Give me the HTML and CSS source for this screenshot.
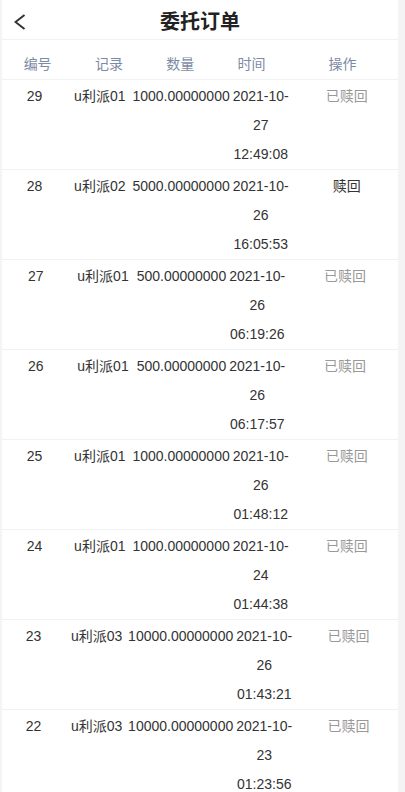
FILE: index.html
```html
<!DOCTYPE html>
<html lang="zh-CN">
<head>
<meta charset="utf-8">
<title>委托订单</title>
<link rel="stylesheet" href="styles.css">
</head>
<body>
<div class="page">
  <header class="topbar">
    <span class="back">
      <svg width="12" height="16" viewBox="0 0 12 16"><polyline points="10.5,1 1.5,8 10.5,15" fill="none" stroke="#333" stroke-width="2"/></svg>
    </span>
    <h1 class="title">委托订单</h1>
  </header>
  <div class="thead">
    <div class="th">编号</div>
    <div class="th">记录</div>
    <div class="th">数量</div>
    <div class="th">时间</div>
    <div class="th th-op">操作</div>
  </div>
  <div class="list">
    <div class="row">
      <div class="c c-id">29</div><div class="c c-rec">u利派01</div><div class="c c-amt">1000.00000000</div><div class="c c-time">2021-10-27 12:49:08</div><div class="c c-op done">已赎回</div>
    </div>
    <div class="row">
      <div class="c c-id">28</div><div class="c c-rec">u利派02</div><div class="c c-amt">5000.00000000</div><div class="c c-time">2021-10-26 16:05:53</div><div class="c c-op">赎回</div>
    </div>
    <div class="row">
      <div class="c c-id">27</div><div class="c c-rec">u利派01</div><div class="c c-amt">500.00000000</div><div class="c c-time">2021-10-26 06:19:26</div><div class="c c-op done">已赎回</div>
    </div>
    <div class="row">
      <div class="c c-id">26</div><div class="c c-rec">u利派01</div><div class="c c-amt">500.00000000</div><div class="c c-time">2021-10-26 06:17:57</div><div class="c c-op done">已赎回</div>
    </div>
    <div class="row">
      <div class="c c-id">25</div><div class="c c-rec">u利派01</div><div class="c c-amt">1000.00000000</div><div class="c c-time">2021-10-26 01:48:12</div><div class="c c-op done">已赎回</div>
    </div>
    <div class="row">
      <div class="c c-id">24</div><div class="c c-rec">u利派01</div><div class="c c-amt">1000.00000000</div><div class="c c-time">2021-10-24 01:44:38</div><div class="c c-op done">已赎回</div>
    </div>
    <div class="row">
      <div class="c c-id">23</div><div class="c c-rec">u利派03</div><div class="c c-amt">10000.00000000</div><div class="c c-time">2021-10-26 01:43:21</div><div class="c c-op done">已赎回</div>
    </div>
    <div class="row">
      <div class="c c-id">22</div><div class="c c-rec">u利派03</div><div class="c c-amt">10000.00000000</div><div class="c c-time">2021-10-23 01:23:56</div><div class="c c-op done">已赎回</div>
    </div>
  </div>
</div>
</body>
</html>
```
FILE: styles.css
```css
html, body {
  margin: 0;
  padding: 0;
}
body {
  background: #f4f4f4;
  font-family: "Liberation Sans", "Noto Sans CJK SC", sans-serif;
  color: #333;
}
.page {
  margin: 0 7px 0 2px;
  background: #fff;
  min-height: 100vh;
}
.topbar {
  position: relative;
  height: 39px;
  border-bottom: 1px solid #f2f2f2;
  display: flex;
  align-items: flex-start;
  justify-content: center;
}
.back {
  position: absolute;
  left: 12px;
  top: 14px;
  width: 12px;
  height: 16px;
  display: block;
}
.back svg {
  display: block;
}
.title {
  margin: 0;
  padding-top: 6px;
  font-size: 20px;
  font-weight: bold;
  color: #222;
  line-height: 32px;
}
.thead {
  display: flex;
  padding-top: 9px;
  line-height: 30px;
  font-size: 14px;
  color: #7d8aa6;
  border-bottom: 1px solid #f2f2f2;
}
.th {
  width: 18%;
  text-align: center;
}
.th-op {
  width: 28%;
}
.row {
  display: flex;
  align-items: flex-start;
  padding-top: 2px;
  font-size: 14px;
  line-height: 29px;
  text-align: center;
  border-bottom: 1px solid #f2f2f2;
}
.c-id, .c-rec {
  flex: 65 1 0;
}
.c-amt {
  flex: none;
  white-space: nowrap;
}
.c-time {
  flex: none;
  width: 62px;
}
.c-op {
  flex: 106 1 0;
  padding-left: 2px;
  margin-right: -2px;
  color: #333;
}
.c-op.done {
  color: #999;
}
```
